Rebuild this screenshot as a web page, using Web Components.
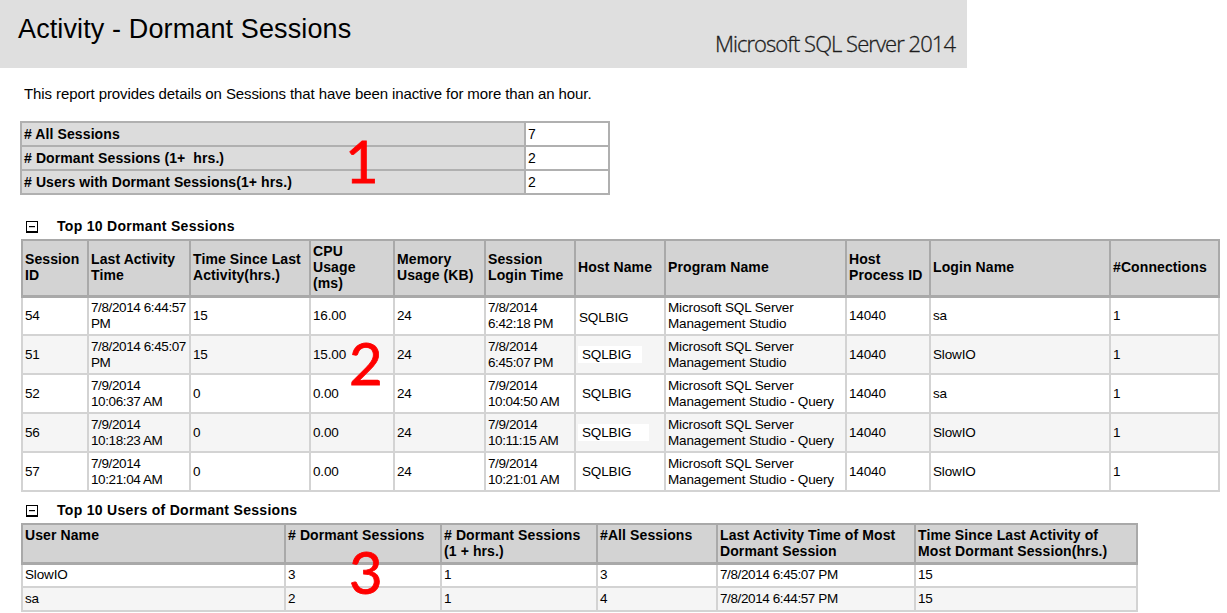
<!DOCTYPE html>
<html lang="en"><head><meta charset="utf-8"><title>Activity - Dormant Sessions</title>
<style>
html,body{margin:0;padding:0;background:#fff}
body{font:13px/16px "Liberation Sans",Arial,sans-serif;color:#000;width:1227px;height:613px;overflow:hidden}
</style></head><body>
<dormant-report></dormant-report>
<script>
class ReportHeader extends HTMLElement{constructor(){super();this.attachShadow({mode:'open'}).innerHTML=`<style>
:host{display:flex;justify-content:space-between;width:967px;height:68px;box-sizing:border-box;background:#dfdfdf;padding:13px 12px 0 18px}
h1{margin:0;font:400 27px/32px "Liberation Sans",Arial,sans-serif;letter-spacing:.12px;color:#000}
.logo{align-self:flex-end;margin-bottom:12px;font:300 22px/26px "Open Sans",sans-serif;letter-spacing:-.95px;color:#1c1c1c;-webkit-text-stroke:.3px #1c1c1c}
</style><h1><slot name="title"></slot></h1><div class="logo"><slot name="logo"></slot></div>`}}
customElements.define('report-header',ReportHeader);

class SectionTitle extends HTMLElement{constructor(){super();this.attachShadow({mode:'open'}).innerHTML=`<style>
:host{display:flex;align-items:center;height:16px;padding-left:5px;font-weight:700;font-size:14px;letter-spacing:.3px;color:#000}
svg{display:block;width:12px;height:12px;margin:1px 19px 0 0;flex:none}
</style><svg viewBox="0 0 12 12"><rect x=".5" y=".5" width="11" height="10.5" fill="#fff" stroke="#000"/><rect x="0" y="10" width="12" height="2" fill="#000"/><rect x="3" y="5" width="6" height="1.2" fill="#000"/></svg><slot></slot>`}}
customElements.define('section-title',SectionTitle);

class MarkNumeral extends HTMLElement{constructor(){super();this.attachShadow({mode:'open'}).innerHTML=`<style>
:host{position:absolute;font:400 58px/58px Lato,sans-serif;color:#f00;-webkit-text-stroke:.8px #f00}
</style><slot></slot>`}}
customElements.define('mark-numeral',MarkNumeral);

class DataTable extends HTMLElement{
 constructor(){super();this.attachShadow({mode:'open'})}
 set config(c){
  const cg=c.cols.map(w=>`<col style="width:${w}px">`).join('');
  const head=`<tr class="hd" style="height:${c.headH}px">`+c.head.map(t=>`<th class="${c.headTop?'top':''}">${t}</th>`).join('')+`</tr>`;
  const rows=c.rows.map((r,i)=>`<tr class="${i%2?'alt':''}" style="height:${c.rowH}px">`+r.map(t=>`<td>${t}</td>`).join('')+`</tr>`).join('');
  this.shadowRoot.innerHTML=`<style>
:host{display:block;width:${c.cols.reduce((a,b)=>a+b,0)}px}
table{border-collapse:collapse;table-layout:fixed;width:100%;font:inherit}
th,td{padding:0 2px;text-align:left;vertical-align:middle;line-height:16px;white-space:nowrap}
th{font-size:14px;font-weight:700;background:#d3d3d3;border:2px solid #a9a9a9;letter-spacing:.1px;padding-bottom:2px}
th.top{vertical-align:top;padding-top:2px;padding-bottom:0}
td{font-size:13.5px;letter-spacing:-.15px;border:2px solid #d3d3d3;background:#fff}
.alt td{background:#f5f5f5}
.hd th{border-bottom-width:3px;border-top-width:2px}
.d{letter-spacing:-.4px}
.sql{display:inline-block;background:#fff;padding:1px 0 0 4px;height:17px;box-sizing:border-box;vertical-align:middle}
.plain{position:relative;top:2px;display:block;padding-left:1px}
.plain2{padding-left:4px;display:block}
</style><table><colgroup>${cg}</colgroup>${head}${rows}</table>`;
 }
}
customElements.define('data-table',DataTable);

class KvTable extends HTMLElement{
 constructor(){super();this.attachShadow({mode:'open'}).innerHTML=`<style>
:host{display:block;width:590px}
table{border-collapse:collapse;table-layout:fixed;width:100%}
td{height:22px;padding:0 2px;border:2px solid #b0b0b0;font-size:14px;line-height:16px}
td:first-child{width:498px;background:#dcdcdc;font-weight:700;letter-spacing:.1px}
td:last-child{background:#fff}
</style><table id="t"></table>`}
 connectedCallback(){
  this.shadowRoot.getElementById('t').innerHTML=[['# All Sessions',7],['# Dormant Sessions (1+&nbsp; hrs.)',2],['# Users with Dormant Sessions(1+ hrs.)',2]].map(r=>`<tr><td>${r[0]}</td><td>${r[1]}</td></tr>`).join('');
 }
}
customElements.define('kv-table',KvTable);

class DormantReport extends HTMLElement{
 constructor(){super();this.attachShadow({mode:'open'}).innerHTML=`<style>
:host{display:block;position:relative;width:1227px;height:613px}
.body{display:flex;flex-direction:column;padding:18px 0 0 21px}
p{margin:0 0 19px 3px;font-size:15px;letter-spacing:-.1px;line-height:16px}
kv-table{margin:0 0 23px -1px}
section-title{margin:0 0 5px 0}
.t2{margin-bottom:10px}
.pos1{left:345px;top:132px}.pos2{left:349px;top:334px}.pos3{left:349px;top:543px}
</style>
<report-header><span slot="title">Activity - Dormant Sessions</span><span slot="logo">Microsoft SQL Server 2014</span></report-header>
<div class="body">
<p>This report provides details on Sessions that have been inactive for more than an hour.</p>
<kv-table></kv-table>
<section-title>Top 10 Dormant Sessions</section-title>
<data-table class="t2" id="a"></data-table>
<section-title>Top 10 Users of Dormant Sessions</section-title>
<data-table id="b"></data-table>
</div>
<mark-numeral class="pos1">1</mark-numeral><mark-numeral class="pos2">2</mark-numeral><mark-numeral class="pos3">3</mark-numeral>`;
 const P1='Microsoft SQL Server<br>Management Studio',P2='Microsoft SQL Server<br>Management Studio - Query';
 const h=(w,t)=>`<span class="sql" style="width:${w}px">${t}</span>`;
 const d=s=>`<span class="d">${s}</span>`;
 this.shadowRoot.getElementById('a').config={cols:[66,102,120,84,91,90,90,181,84,180,109],headH:56,rowH:39,
  head:['Session<br>ID','Last Activity<br>Time','Time Since Last<br>Activity(hrs.)','CPU<br>Usage<br>(ms)','Memory<br>Usage (KB)','Session<br>Login Time','Host Name','Program Name','Host<br>Process ID','Login Name','#Connections'],
  rows:[
  [54,d('7/8/2014 6:44:57<br>PM'),15,'16.00',24,d('7/8/2014<br>6:42:18 PM'),'<span class="plain">SQLBIG</span>',P1,14040,'sa',1],
  [51,d('7/8/2014 6:45:07<br>PM'),15,'15.00',24,d('7/8/2014<br>6:45:07 PM'),h(64,'SQLBIG'),P1,14040,'SlowIO',1],
  [52,d('7/9/2014<br>10:06:37 AM'),0,'0.00',24,d('7/9/2014<br>10:04:50 AM'),'<span class="plain2">SQLBIG</span>',P2,14040,'sa',1],
  [56,d('7/9/2014<br>10:18:23 AM'),0,'0.00',24,d('7/9/2014<br>10:11:15 AM'),h(71,'SQLBIG'),P2,14040,'SlowIO',1],
  [57,d('7/9/2014<br>10:21:04 AM'),0,'0.00',24,d('7/9/2014<br>10:21:01 AM'),'<span class="plain2">SQLBIG</span>',P2,14040,'SlowIO',1]]};
 this.shadowRoot.getElementById('b').config={cols:[263,156,156,120,198,222],headH:39,rowH:24,headTop:true,
  head:['User Name','# Dormant Sessions','# Dormant Sessions<br>(1 + hrs.)','#All Sessions','Last Activity Time of Most<br>Dormant Session','Time Since Last Activity of<br>Most Dormant Session(hrs.)'],
  rows:[['SlowIO',3,1,3,d('7/8/2014 6:45:07 PM'),15],['sa',2,1,4,d('7/8/2014 6:44:57 PM'),15]]};
 }
}
customElements.define('dormant-report',DormantReport);
</script></body></html>
